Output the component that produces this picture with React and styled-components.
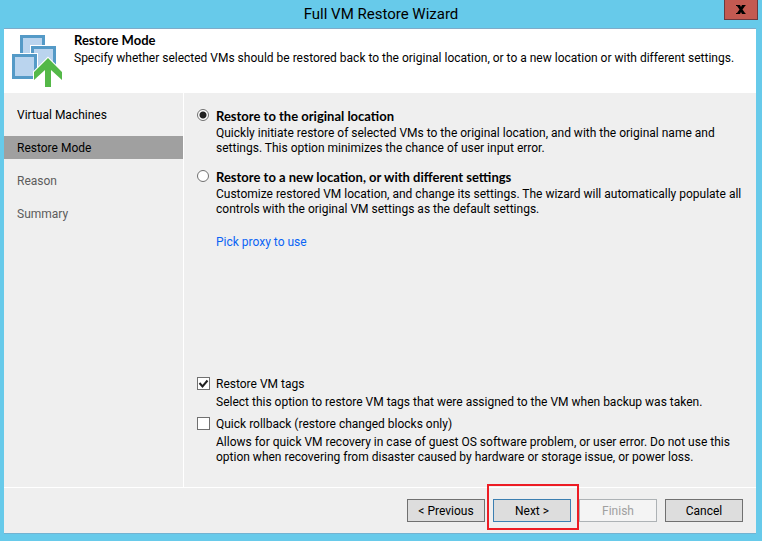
import React, { useState } from 'react'
import styled, { createGlobalStyle } from 'styled-components';

const GlobalStyle = createGlobalStyle`
* {
  box-sizing: border-box;
}
body {
  margin: 0;
  background-color: #67caea;
  font-family: Roboto, "Open Sans", sans-serif;
  font-size: 12px;
  line-height: 15px;
  color: #000;
}
button, input {
  font: inherit;
  margin: 0;
}
`;
const Window = styled.div`
display: flex;
flex-direction: column;
min-height: 100vh;
padding: 0 6px 7px 4px;
`;
const TitleBar = styled.div`
display: grid;
grid-template-columns: 34px 1fr 34px;
height: 28px;
margin-right: -2px;
`;
const Title = styled.h1`
grid-column: 2;
margin: 0;
font-size: 15px;
font-weight: 400;
line-height: 28px;
text-align: center;
`;
const Close = styled.button`
display: flex;
align-items: center;
justify-content: center;
height: 20px;
padding: 0;
border: 1px solid #6b3a3f;
border-top: none;
background-color: #c35a51;
`;
const Dialog = styled.div`
flex: 1;
display: flex;
flex-direction: column;
border-top: 1px solid #7fabc9;
border-bottom: 1px solid #72b3d2;
background-color: #efefef;
`;
const Header = styled.header`
display: flex;
gap: 11px;
height: 64px;
padding: 2px 8px;
background-color: #fff;
line-height: 18px;
svg {
  flex: none;
}
`;
const HeaderTitle = styled.h2`
margin: 0;
font-family: Lato, "Open Sans", sans-serif;
font-size: 13px;
font-weight: 700;
`;
const HeaderText = styled.p`
margin: 0;
`;
const Main = styled.div`
flex: 1;
display: flex;
`;
const Steps = styled.nav`
display: flex;
flex-direction: column;
gap: 10px;
width: 180px;
padding-top: 10px;
border-right: 1px solid #fff;
`;
const Step = styled.a`
padding: 1px 0 0 13px;
line-height: 22px;
text-decoration: none;
color: ${({ $pending }) => $pending ? '#5c5c5c' : '#000'};
background-color: ${({ $active }) => $active ? '#a0a0a0' : 'transparent'};
`;
const Content = styled.main`
flex: 1;
display: flex;
flex-direction: column;
padding: 14px 13px 22px;
`;
const Modes = styled.div`
display: flex;
flex-direction: column;
gap: 12px;
`;
const Extras = styled.div`
display: flex;
flex-direction: column;
gap: 5px;
margin-top: auto;
`;
const Label = styled.label`
display: flex;
align-items: center;
gap: 6px;
line-height: 18px;
`;
const ModeLabel = styled(Label)`
gap: 7px;
font-family: Lato, "Open Sans", sans-serif;
font-size: 13px;
font-weight: 700;
`;
const Hint = styled.p`
margin: 0;
padding: ${({ $spaced }) => $spaced ? 2 : 1}px 0 0 19px;
`;
const Radio = styled.input`
appearance: none;
width: 12px;
height: 12px;
margin-bottom: 2px;
border: 1px solid #707070;
border-radius: 50%;
background-color: #fff;
&:checked {
  background-image: radial-gradient(circle, #212121 0 3px, transparent 4px);
}
`;
const CheckWrap = styled.span`
display: grid;
margin-bottom: 1px;
svg {
  grid-area: 1 / 1;
  pointer-events: none;
}
`;
const Checkbox = styled.input`
grid-area: 1 / 1;
appearance: none;
width: 13px;
height: 13px;
border: 1px solid #707070;
background-color: #fff;
`;
const ProxyLink = styled.a`
align-self: flex-start;
margin: 18px 0 0 19px;
color: #0a64f5;
text-decoration: none;
`;
const Footer = styled.footer`
display: flex;
justify-content: flex-end;
gap: 8px;
padding: 11px 13px;
border-top: 1px solid #fff;
`;
const Button = styled.button`
width: 78px;
height: 23px;
padding: 1px 0 0;
border: 1px solid ${({ $primary }) => $primary ? '#3c7fb1' : '#707070'};
background-color: #ddd;
color: #000;
&:disabled {
  border-color: #adb2b5;
  background-color: #f4f4f4;
  color: #a0a0a0;
}
`;
const Highlighted = styled.div`
position: relative;
height: 23px;
&::after {
  content: "";
  position: absolute;
  inset: -15px -8px -8px -6px;
  border: 2px solid #ed1c24;
  pointer-events: none;
}
`;

const RestoreIcon = () => (
  <svg width="51" height="60" viewBox="0 0 51 60" aria-hidden="true">
    <g fill="#bad4ee" stroke="#549ac7" strokeWidth="3">
      <rect x="9.500" y="5.500" width="22" height="22" />
      <path d="M18 14H45V41H18Z" fill="#fff" stroke="none" />
      <rect x="20.500" y="16.500" width="22" height="22" />
      <path d="M0 22H26V49H0Z" fill="#fff" stroke="none" />
      <rect x="1.500" y="24.500" width="22" height="22" />
    </g>
    <path d="M36 27L50 41V49L39 39V56H33V39L22 49V41Z" fill="#54b848" stroke="#fff" strokeWidth="2" paintOrder="stroke" />
  </svg>
);

const CloseIcon = () => (
  <svg width="10" height="9" viewBox="0 0 10 9" aria-hidden="true">
    <path d="M0 0H4L5 2L6 0H9.500V1H9L6.500 4.500L9 8H9.500V9H6L5 7L4 9H0V8H1L3.500 4.500L1 1H0Z" fill="#000" />
  </svg>
);

const CheckOption = ({ label, text, checked, onChange }) => (
  <div>
    <Label>
      <CheckWrap>
        <Checkbox type="checkbox" checked={checked} onChange={e => onChange(e.target.checked)} />
        {checked && (
          <svg width="13" height="13" viewBox="0 0 13 13">
            <path d="M2.500 6L5.500 9.500L10.500 3.500" fill="none" stroke="#212121" strokeWidth="2" />
          </svg>
        )}
      </CheckWrap>
      {label}
    </Label>
    <Hint $spaced>{text}</Hint>
  </div>
);

const modes = [
  {
    id: 'original',
    label: 'Restore to the original location',
    text: ['Quickly initiate restore of selected VMs to the original location, and with the original name and', 'settings. This option minimizes the chance of user input error.'],
  },
  {
    id: 'new',
    label: 'Restore to a new location, or with different settings',
    text: ['Customize restored VM location, and change its settings. The wizard will automatically populate all', 'controls with the original VM settings as the default settings.'],
  },
];

const App = () => {
  const [mode, setMode] = useState('original');
  const [tags, setTags] = useState(true);
  const [quick, setQuick] = useState(false);
  return (
    <>
      <GlobalStyle />
      <Window>
        <TitleBar>
          <Title>Full VM Restore Wizard</Title>
          <Close aria-label="Close"><CloseIcon /></Close>
        </TitleBar>
        <Dialog>
          <Header>
            <RestoreIcon />
            <div>
              <HeaderTitle>Restore Mode</HeaderTitle>
              <HeaderText>Specify whether selected VMs should be restored back to the original location, or to a new location or with different settings.</HeaderText>
            </div>
          </Header>
          <Main>
            <Steps>
              <Step href="#machines">Virtual Machines</Step>
              <Step href="#mode" $active>Restore Mode</Step>
              <Step href="#reason" $pending>Reason</Step>
              <Step href="#summary" $pending>Summary</Step>
            </Steps>
            <Content>
              <Modes>
                {modes.map(m => (
                  <div key={m.id}>
                    <ModeLabel>
                      <Radio type="radio" name="mode" checked={mode === m.id} onChange={() => setMode(m.id)} />
                      {m.label}
                    </ModeLabel>
                    <Hint>{m.text[0]}<br />{m.text[1]}</Hint>
                  </div>
                ))}
              </Modes>
              <ProxyLink href="#proxy">Pick proxy to use</ProxyLink>
              <Extras>
                <CheckOption
                  label="Restore VM tags"
                  text="Select this option to restore VM tags that were assigned to the VM when backup was taken."
                  checked={tags}
                  onChange={setTags}
                />
                <CheckOption
                  label="Quick rollback (restore changed blocks only)"
                  text={<>Allows for quick VM recovery in case of guest OS software problem, or user error. Do not use this<br />option when recovering from disaster caused by hardware or storage issue, or power loss.</>}
                  checked={quick}
                  onChange={setQuick}
                />
              </Extras>
            </Content>
          </Main>
          <Footer>
            <Button>&lt; Previous</Button>
            <Highlighted>
              <Button $primary>Next &gt;</Button>
            </Highlighted>
            <Button disabled>Finish</Button>
            <Button>Cancel</Button>
          </Footer>
        </Dialog>
      </Window>
    </>
  )
}

export default App
